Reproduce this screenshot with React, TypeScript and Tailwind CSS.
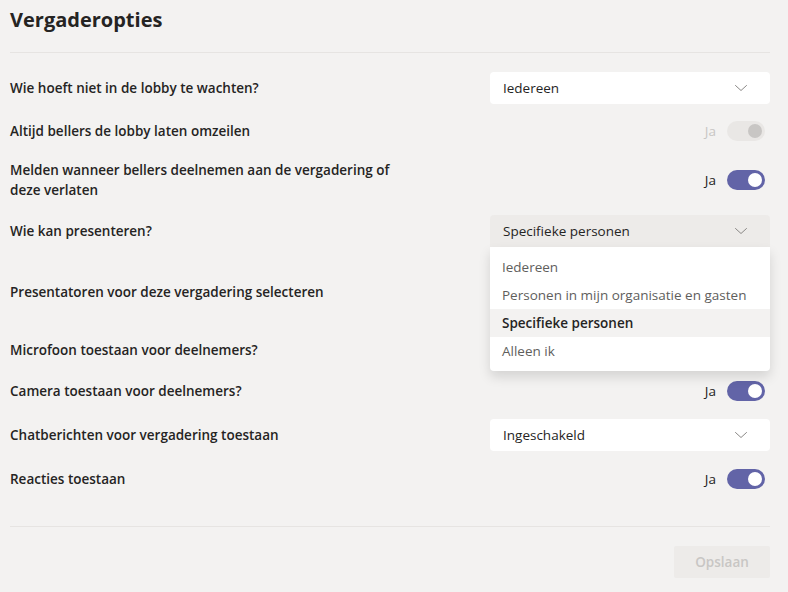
const font = { fontFamily: '"Open Sans", "Noto Sans", sans-serif' };

const Chevron = () => (
	<svg width="14" height="8" viewBox="0 0 14 8" fill="none" className="shrink-0">
		<path d="M1.5 1.5l5.5 5 5.5-5" stroke="#8a8886" strokeWidth="1" strokeLinecap="round" strokeLinejoin="round" />
	</svg>
);

const Toggle = ({disabled}: {disabled?: boolean}) => (
	<div className="flex items-center gap-[11px]">
		<span className={disabled ? 'text-[13.5px] text-[#c8c6c4]' : 'text-[13.5px] text-[#252423]'}>Ja</span>
		<div
			className={
				disabled
					? 'flex h-[20px] w-[38px] items-center justify-end rounded-full bg-[#e9e7e5] pr-[3px]'
					: 'flex h-[20px] w-[38px] items-center justify-end rounded-full bg-[#6264a7] pr-[3px]'
			}
		>
			<div className={disabled ? 'size-[14px] rounded-full bg-[#c8c6c4]' : 'size-[14px] rounded-full bg-white'}></div>
		</div>
	</div>
);

const Select = ({value, open}: {value: string; open?: boolean}) => (
	<div
		className={
			open
				? 'flex h-[32px] w-[280px] items-center justify-between rounded-t-[4px] bg-[#edebe9] pl-[13px] pr-[22px]'
				: 'flex h-[32px] w-[280px] items-center justify-between rounded-[4px] bg-white pl-[13px] pr-[22px]'
		}
	>
		<span className="text-[13.5px] text-[#252423]">{value}</span>
		<Chevron />
	</div>
);

interface RowProps {
	label: React.ReactNode;
	control?: React.ReactNode;
	className: string;
}

const Row = ({label, control, className}: RowProps) => (
	<div className={'flex items-center justify-between ' + className}>
		<div className="w-[400px] text-[13.5px] font-semibold leading-[20px] text-[#252423]">{label}</div>
		<div className="flex justify-end">{control}</div>
	</div>
);

const options = ['Iedereen', 'Personen in mijn organisatie en gasten', 'Specifieke personen', 'Alleen ik'];

export default function App() {
	return (
		<div className="h-[592px] w-[788px] overflow-hidden bg-[#f3f2f1]" style={font}>
			<div className="pl-[10px] pr-[18px]">
				<h1 className="pt-[5px] text-[20px] font-bold leading-[30px] text-[#252423]">Vergaderopties</h1>
				<div className="mt-[17px] h-px bg-[#e6e4e2]"></div>

				<Row className="mt-[19px] h-[32px]" label="Wie hoeft niet in de lobby te wachten?" control={<Select value="Iedereen" />} />
				<Row className="mt-[11px] h-[32px]" label="Altijd bellers de lobby laten omzeilen" control={<div className="pr-[5px]"><Toggle disabled /></div>} />
				<Row
					className="mt-[13px] h-[40px]"
					label="Melden wanneer bellers deelnemen aan de vergadering of deze verlaten"
					control={<div className="pr-[5px]"><Toggle /></div>}
				/>
				<div className="relative">
					<Row className="mt-[15px] h-[32px]" label="Wie kan presenteren?" control={<Select value="Specifieke personen" open />} />
					<div className="absolute right-0 top-[32px] z-10 w-[280px] rounded-b-[4px] bg-white py-[6px] shadow-[0_6px_12px_rgba(0,0,0,0.13)]">
						{options.map((o) => (
							<div
								key={o}
								className={
									o === 'Specifieke personen'
										? 'flex h-[28px] items-center bg-[#f3f2f1] pl-[12px] text-[13.5px] font-semibold text-[#252423]'
										: 'flex h-[28px] items-center pl-[12px] text-[13.5px] text-[#605e5c]'
								}
							>
								{o}
							</div>
						))}
					</div>
				</div>
				<Row className="mt-[29px] h-[32px]" label="Presentatoren voor deze vergadering selecteren" />
				<Row className="mt-[26px] h-[32px]" label="Microfoon toestaan voor deelnemers?" />
				<Row className="mt-[9px] h-[32px]" label="Camera toestaan voor deelnemers?" control={<div className="pr-[5px]"><Toggle /></div>} />
				<Row className="mt-[12px] h-[32px]" label="Chatberichten voor vergadering toestaan" control={<Select value="Ingeschakeld" />} />
				<Row className="mt-[12px] h-[32px]" label="Reacties toestaan" control={<div className="pr-[5px]"><Toggle /></div>} />

				<div className="mt-[31px] h-px bg-[#e6e4e2]"></div>
				<div className="mt-[19px] flex justify-end">
					<button className="h-[32px] w-[96px] rounded-[2px] bg-[#edebe9] text-[13.5px] font-semibold text-[#c8c6c4]">Opslaan</button>
				</div>
			</div>
		</div>
	);
}
